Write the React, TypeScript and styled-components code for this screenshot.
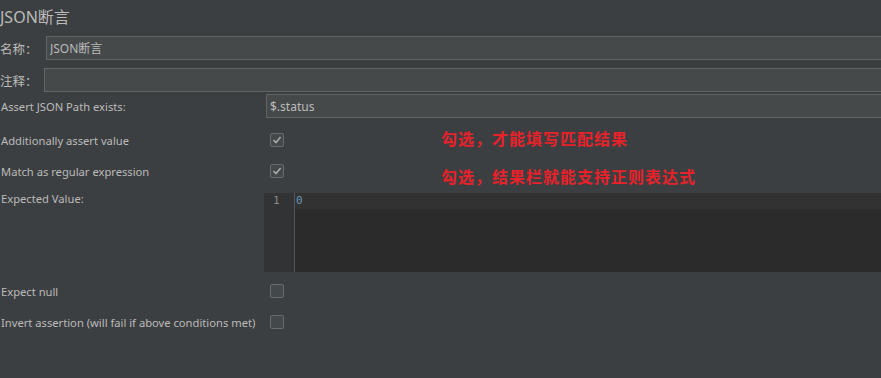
import styled, { createGlobalStyle } from 'styled-components';

const GlobalStyle = createGlobalStyle`
  html, body {
    margin: 0;
    padding: 0;
    background: #3c3f41;
  }

  body {
    font-family: 'Noto Sans', 'Noto Sans CJK SC', sans-serif;
    color: #bbbbbb;
    overflow: hidden;
  }
`;

type CheckRow = {
  label: string;
  checked: boolean;
  note?: string;
  noteTop?: number;
};

const flagRows: Array<CheckRow> = [
  { label: 'Additionally assert value', checked: true, note: '勾选，才能填写匹配结果', noteTop: 5 },
  { label: 'Match as regular expression', checked: true, note: '勾选，结果栏就能支持正则表达式', noteTop: 12 },
];

const tailRows: Array<CheckRow> = [
  { label: 'Expect null', checked: false },
  { label: 'Invert assertion (will fail if above conditions met)', checked: false },
];

function CheckIcon() {
  return (
    <svg width="10" height="10" viewBox="0 0 10 10">
      <path d="M1.5 5.2 L4 7.6 L8.6 2" fill="none" stroke="#a9a9a9" strokeWidth="1.6" />
    </svg>
  );
}

function FlagRow({ label, checked, note, noteTop }: CheckRow) {
  return (
    <StyledFlagRow>
      <StyledFlagLabel>{label}</StyledFlagLabel>
      <StyledCheckBox>{checked && <CheckIcon />}</StyledCheckBox>
      {note && <StyledNote $top={noteTop ?? 0}>{note}</StyledNote>}
    </StyledFlagRow>
  );
}

function App() {
  return (
    <StyledPage>
      <GlobalStyle />
      <StyledTitle>JSON断言</StyledTitle>
      <StyledFieldRow $top={4} $labelWidth={46}>
        <StyledShortLabel>名称：</StyledShortLabel>
        <StyledInput value="JSON断言" readOnly />
      </StyledFieldRow>
      <StyledFieldRow $top={9} $labelWidth={44}>
        <StyledShortLabel>注释：</StyledShortLabel>
        <StyledInput value="" readOnly />
      </StyledFieldRow>
      <StyledFieldRow $top={3} $labelWidth={266}>
        <StyledLabel>Assert JSON Path exists:</StyledLabel>
        <StyledInput value="$.status" readOnly />
      </StyledFieldRow>
      <StyledFlags>
        {flagRows.map(row => (
          <FlagRow key={row.label} {...row} />
        ))}
      </StyledFlags>
      <StyledEditorRow>
        <StyledLabel>Expected Value:</StyledLabel>
        <StyledEditor>
          <StyledGutter>
            <StyledLineNo>1</StyledLineNo>
          </StyledGutter>
          <StyledCode>
            <StyledCurrentLine>0</StyledCurrentLine>
          </StyledCode>
        </StyledEditor>
      </StyledEditorRow>
      <StyledFlags $top={3}>
        {tailRows.map(row => (
          <FlagRow key={row.label} {...row} />
        ))}
      </StyledFlags>
    </StyledPage>
  );
}

const StyledPage = styled.div`
  width: 881px;
  height: 378px;
  background: #3c3f41;
`;

const StyledTitle = styled.h1`
  margin: 0;
  height: 32px;
  padding-top: 6px;
  box-sizing: border-box;

  font-size: 16px;
  font-weight: 400;
  line-height: 22px;
  color: #bbbbbb;
`;

const StyledFieldRow = styled.div<{ $top: number; $labelWidth: number }>`
  display: grid;
  grid-template-columns: ${({ $labelWidth }) => $labelWidth}px 1fr;
  align-items: center;

  height: 23px;
  margin-top: ${({ $top }) => $top}px;
  margin-right: -20px;
`;

const StyledLabel = styled.span`
  padding-left: 1px;
  font-size: 11.2px;
  color: #bbbbbb;
  white-space: nowrap;
`;

const StyledFlagLabel = styled(StyledLabel)`
  padding-top: 1px;
`;

const StyledShortLabel = styled.span`
  font-size: 12.5px;
  color: #bbbbbb;
`;

const StyledInput = styled.input`
  box-sizing: border-box;
  height: 24px;
  padding: 0 3px;
  border: 1px solid #646464;

  background: #45494a;
  color: #bbbbbb;
  font-family: 'Noto Sans', 'Noto Sans CJK SC', sans-serif;
  font-size: 12px;
  outline: none;
`;

const StyledFlags = styled.div<{ $top?: number }>`
  display: flex;
  flex-direction: column;
  margin-top: ${({ $top }) => $top ?? 7}px;
`;

const StyledFlagRow = styled.div`
  position: relative;
  display: grid;
  grid-template-columns: 270px 14px;
  align-items: center;

  height: 31px;
`;

const StyledCheckBox = styled.span`
  display: flex;
  align-items: center;
  justify-content: center;

  box-sizing: border-box;
  width: 14px;
  height: 14px;
  border: 1px solid #6b6b6b;
  border-radius: 2px;

  background: #43494a;
`;

const StyledNote = styled.span<{ $top: number }>`
  position: absolute;
  left: 441px;
  top: ${({ $top }) => $top}px;

  font-family: 'Noto Sans CJK SC', sans-serif;
  font-size: 16px;
  font-weight: 700;
  letter-spacing: 1px;
  line-height: 18px;
  color: #e8212a;
  white-space: nowrap;
`;

const StyledEditorRow = styled.div`
  display: grid;
  grid-template-columns: 264px 1fr;
  align-items: start;

  height: 79px;
  margin-top: 7px;

  > span {
    line-height: 12px;
  }
`;

const StyledEditor = styled.div`
  display: flex;
  height: 79px;
  background: #2b2b2b;
`;

const StyledGutter = styled.div`
  box-sizing: border-box;
  width: 31px;
  border-right: 1px solid #555555;

  background: #313335;
`;

const StyledLineNo = styled.div`
  height: 16px;
  padding-left: 9px;

  font-family: 'DejaVu Sans Mono', monospace;
  font-size: 11px;
  line-height: 15px;
  color: #8a8a8a;
`;

const StyledCode = styled.div`
  flex: 1;
`;

const StyledCurrentLine = styled.div`
  height: 16px;
  padding-left: 1px;

  background: #323232;
  font-family: 'DejaVu Sans Mono', monospace;
  font-size: 11px;
  line-height: 15px;
  color: #6897bb;
`;

export default App;
